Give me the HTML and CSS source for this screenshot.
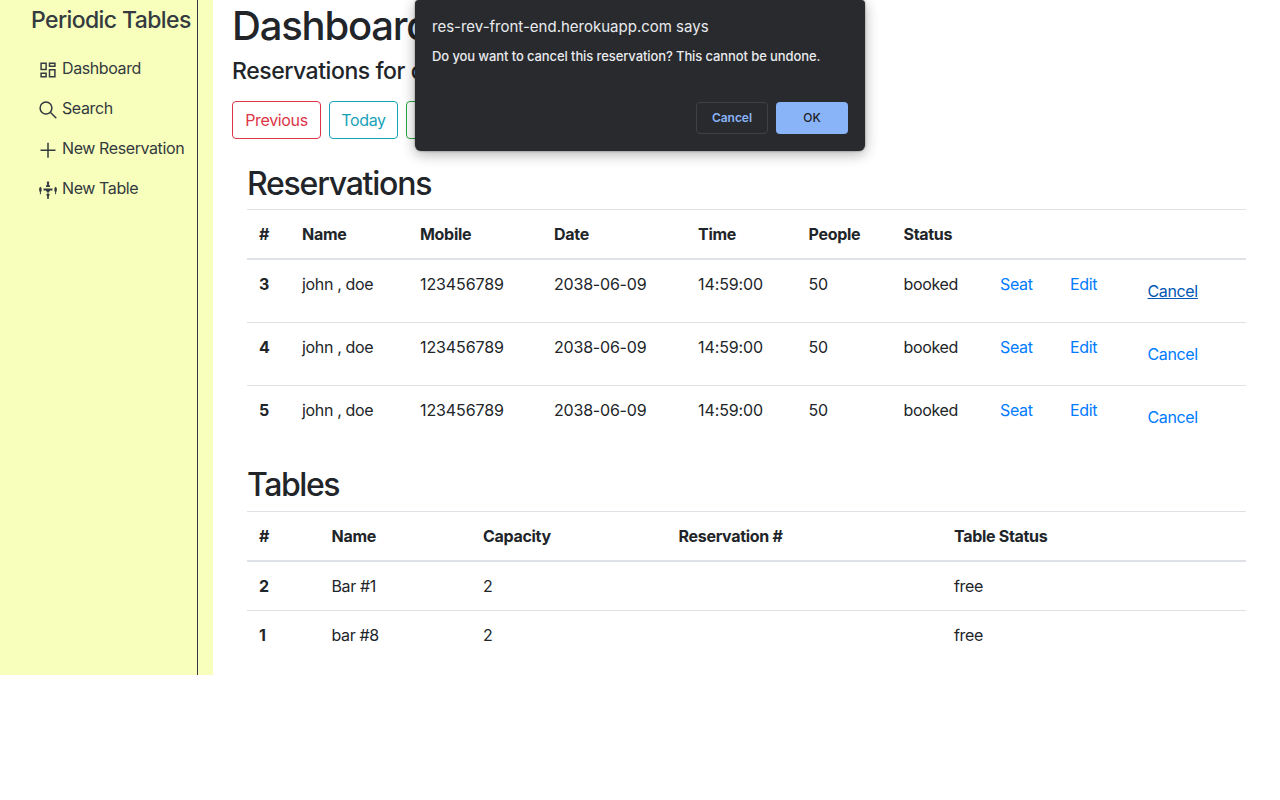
FILE: index.html
```html
<!DOCTYPE html>
<html lang="en">
<head>
<meta charset="utf-8">
<title>Periodic Tables</title>
<link rel="stylesheet" href="styles.css">
</head>
<body>
<div class="layout">
  <nav class="sidebar">
    <div class="sidebar-inner">
      <div class="brand"><span>Periodic Tables</span></div>
      <ul class="menu">
        <li><svg class="icon" viewBox="0 0 18 18"><path d="M2.100 2.200h5v6.300h-5zM10.500 2.200h5.400v3h-5.400zM10.500 8.800h5.400v7h-5.400zM2.100 12.200h5v3.600h-5z"/></svg><span>Dashboard</span></li>
        <li><svg class="icon" viewBox="0 0 18 18"><circle cx="7" cy="7" r="5.900"/><path d="M11.300 11.300l6 6"/></svg><span>Search</span></li>
        <li><svg class="icon" viewBox="0 0 18 18"><path d="M9 1.800v15M1.500 9.300h15"/></svg><span>New Reservation</span></li>
        <li><svg class="icon solid" viewBox="0 0 18 18"><path d="M4.500 7.600h9v2h-2.300l-.9.800v1H7.700v-1l-.9-.8H4.500zM9 0l1.300 1.500-.5 1.900 1.100 1.100v1.600H7.100V4.500l1.100-1.100-.5-1.900zM9 12l1.700 1.500-.8 1.700-.2 2.800H8.300l-.2-2.800-.8-1.700zM1.400 5.700l1.200 1.300v3l-.7 1v2.300H.9V11l-.7-1V7zM16.600 5.700l1.200 1.300v3l-.7 1v2.300h-1V11l-.7-1V7z"/></svg><span>New Table</span></li>
      </ul>
    </div>
  </nav>
  <main class="content">
    <h1><span>Dashboard</span></h1>
    <h4><span>Reservations for date</span></h4>
    <div class="buttons">
      <button class="btn previous">Previous</button>
      <button class="btn today">Today</button>
      <button class="btn next">Next</button>
    </div>
    <section class="panel">
      <h2 class="h-res"><span>Reservations</span></h2>
      <table class="reservations">
        <colgroup><col class="c1"><col class="c2"><col class="c3"><col class="c4"><col class="c5"><col class="c6"><col class="c7"><col class="c8"><col class="c9"><col class="c10"></colgroup>
        <thead><tr><th>#</th><th>Name</th><th>Mobile</th><th>Date</th><th>Time</th><th>People</th><th>Status</th><th></th><th></th><th></th></tr></thead>
        <tbody>
          <tr><th>3</th><td>john , doe</td><td class="num">123456789</td><td class="date">2038-06-09</td><td class="num">14:59:00</td><td>50</td><td>booked</td><td><a>Seat</a></td><td><a>Edit</a></td><td class="action"><a class="hover">Cancel</a></td></tr>
          <tr><th>4</th><td>john , doe</td><td class="num">123456789</td><td class="date">2038-06-09</td><td class="num">14:59:00</td><td>50</td><td>booked</td><td><a>Seat</a></td><td><a>Edit</a></td><td class="action"><a>Cancel</a></td></tr>
          <tr><th>5</th><td>john , doe</td><td class="num">123456789</td><td class="date">2038-06-09</td><td class="num">14:59:00</td><td>50</td><td>booked</td><td><a>Seat</a></td><td><a>Edit</a></td><td class="action"><a>Cancel</a></td></tr>
        </tbody>
      </table>
      <h2 class="h-tab"><span>Tables</span></h2>
      <table class="tables">
        <colgroup><col class="t1"><col class="t2"><col class="t3"><col class="t4"><col class="t5"></colgroup>
        <thead><tr><th>#</th><th>Name</th><th>Capacity</th><th>Reservation #</th><th>Table Status</th></tr></thead>
        <tbody>
          <tr><th>2</th><td>Bar #1</td><td>2</td><td></td><td>free</td></tr>
          <tr><th>1</th><td>bar #8</td><td>2</td><td></td><td>free</td></tr>
        </tbody>
      </table>
    </section>
  </main>
</div>
<div class="dialog" role="dialog">
  <div class="dialog-title"><span>res-rev-front-end.herokuapp.com says</span></div>
  <div class="dialog-text"><span>Do you want to cancel this reservation? This cannot be undone.</span></div>
  <div class="dialog-actions">
    <button class="dialog-cancel">Cancel</button>
    <button class="dialog-ok">OK</button>
  </div>
</div>
</body>
</html>
```
FILE: styles.css
```css
* { box-sizing: border-box; }
body {
  margin: 0;
  background: #fff;
  color: #212529;
  font: 16px/24px Inter, "Liberation Sans", sans-serif;
  letter-spacing: -0.35px;
}
button { font: inherit; letter-spacing: inherit; background: none; }
h1, h2, h4 { margin: 0; font-weight: 500; white-space: nowrap; }

.layout { display: flex; height: 675px; }
.sidebar { width: 213px; background: #f8ffbc; color: #343a40; }
.sidebar-inner { width: 198px; height: 100%; border-right: 1px solid #343a40; }
.brand { padding: 5px 0 0 31px; font-size: 23px; line-height: 30px; font-weight: 500; letter-spacing: -0.6px; white-space: nowrap; }
.menu { list-style: none; margin: 0; padding: 13px 0 0 39px; letter-spacing: -0.4px; }
.menu li { display: flex; height: 40px; align-items: center; gap: 5px; white-space: nowrap; }
.icon { width: 18px; height: 18px; margin-top: 3px; flex: none; fill: none; stroke: currentColor; stroke-width: 1.5; }
.solid { fill: currentColor; stroke: none; }

.content { flex: 1; padding-left: 19px; }
h1 { padding-top: 2px; font-size: 40px; line-height: 48px; letter-spacing: -1.2px; }
h4 { margin-top: 7px; font-size: 23px; line-height: 29px; letter-spacing: -0.45px; }
.buttons { display: flex; gap: 8px; margin-top: 15px; }
.btn { height: 38px; padding: 0; border: 1px solid; border-radius: 4px; }
.previous { width: 89px; color: #dc3545; }
.today { width: 69px; color: #17a2b8; }
.next { width: 63px; color: #28a745; }

.panel { width: 999px; margin-left: 15px; }
h2 { font-size: 32px; line-height: 38px; letter-spacing: -1.25px; }
.h-res { padding-top: 26px; height: 70px; }
.h-tab { padding-top: 18px; height: 63px; letter-spacing: -1.4px; }
table { width: 999px; table-layout: fixed; border-collapse: separate; border-spacing: 0; }
th, td { padding: 12px; text-align: left; vertical-align: top; white-space: nowrap; border-top: 1px solid #dee2e6; line-height: 24px; }
th { font-weight: 700; letter-spacing: -0.3px; }
thead th { height: 51px; border-bottom: 2px solid #dee2e6; }
tbody tr:first-child > * { border-top: 0; }
.reservations tbody tr { height: 63px; }
.reservations tbody tr:first-child { height: 62px; }
.reservations td.action { padding: 19px 12px 0 25px; }
.num { letter-spacing: -0.1px; }
.date { letter-spacing: -0.2px; }
.c1 { width: 43px; } .c2 { width: 118px; } .c3 { width: 134px; } .c4 { width: 144px; } .c5 { width: 110.5px; }
.c6 { width: 95px; } .c7 { width: 96.5px; } .c8 { width: 70px; } .c9 { width: 64.5px; } .c10 { width: 123.5px; }
.t1 { width: 72.5px; } .t2 { width: 151.5px; } .t3 { width: 195.5px; } .t4 { width: 275.5px; } .t5 { width: 304px; }
a { color: #007bff; }
a.hover { color: #0056b3; text-decoration: underline; }

.dialog {
  position: absolute; left: 415px; top: 0; width: 450px; height: 151px;
  padding: 16px 17px; border-radius: 4px 4px 6px 6px;
  background: #292a2d; color: #e8eaed;
  box-shadow: 0 3px 14px rgba(0,0,0,.32), 0 0 2px rgba(0,0,0,.5);
}
.dialog-title { font-size: 15px; line-height: 22px; letter-spacing: 0; white-space: nowrap; }
.dialog-text { margin-top: 8px; font-size: 13px; line-height: 20px; font-weight: 500; letter-spacing: -0.1px; white-space: nowrap; }
.dialog-actions { display: flex; justify-content: flex-end; gap: 8px; margin-top: 36px; }
.dialog-actions button { width: 72px; height: 32px; padding: 0; border-radius: 4px; font-size: 12px; font-weight: 600; letter-spacing: -0.05px; }
.dialog-cancel { border: 1px solid #3f4145; color: #8ab4f8; }
.dialog-ok { border: 0; background: #8ab4f8; color: #202124; }
.dialog-actions .dialog-ok { font-weight: 500; }
```
